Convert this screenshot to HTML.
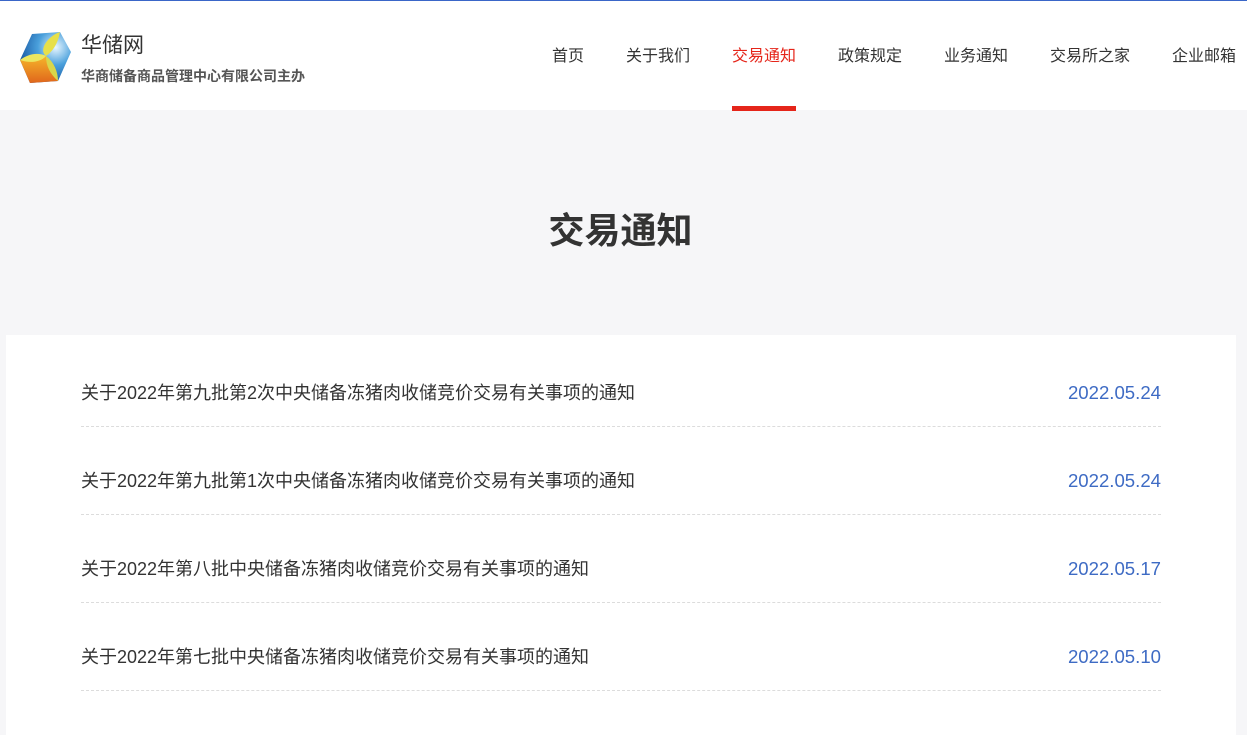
<!DOCTYPE html>
<html><head><meta charset="utf-8"><style>
body{margin:0;width:1247px;height:695px;overflow:hidden;background:#f6f6f8;font-family:"Liberation Sans","Noto Sans CJK SC",sans-serif;}
.top{height:1px;background:#3a66c8;}
.hdr{height:109px;background:#fff;position:relative;}
.logo{position:absolute;left:18px;top:29px;}
.t1{position:absolute;left:81px;top:28px;font-size:21px;color:#333;}
.t2{position:absolute;left:81px;top:65px;font-size:14px;color:#555;font-weight:bold;}
.nav a{position:absolute;top:45px;font-size:16px;color:#333;text-decoration:none;line-height:22px;}
.nav a.on{color:#e5251a;}
.bar{position:absolute;left:732px;top:105px;width:64px;height:5px;background:#e5251a;}
h1{position:absolute;top:202px;left:0;width:1241px;text-align:center;margin:0;font-size:36px;color:#333;font-weight:bold;}
.card{position:absolute;left:6px;top:335px;width:1230px;height:400px;background:#fff;}
.row{position:absolute;left:75px;width:1080px;height:88px;border-bottom:1px dashed #dcdcdc;box-sizing:border-box;}
.row span{position:absolute;top:41px;font-size:18px;line-height:26px;color:#333;}
.row b{position:absolute;right:0;top:41px;line-height:26px;font-size:18.6px;font-weight:normal;color:#3e6bc4;}
</style></head><body>
<div class="top"></div>
<div class="hdr">
<svg class="logo" width="56" height="56" viewBox="0 0 56 56">
<defs><radialGradient id="g" cx="0.7" cy="0.3" r="0.7"><stop offset="0" stop-color="#e8f6ff"/><stop offset="0.5" stop-color="#4aa0dc"/><stop offset="1" stop-color="#1d5fa8"/></radialGradient>
<linearGradient id="o" x1="0" y1="0" x2="0" y2="1"><stop offset="0" stop-color="#f5b52a"/><stop offset="1" stop-color="#e0661c"/></linearGradient></defs>
<polygon points="14,4 42,2 53,22 40,51 12,53 2,30" fill="url(#g)"/>
<polygon points="2,30 28,26 40,51 12,53" fill="url(#o)"/>
<path d="M28,26 C20,20 30,6 42,2 C40,14 34,22 28,26Z" fill="#e7e04a"/>
<path d="M28,26 C22,33 10,33 2,30 C10,24 20,22 28,26Z" fill="#ece760"/>
<path d="M28,26 C36,32 40,42 40,51 C32,44 28,36 28,26Z" fill="#d9d64a"/>
</svg>
<div class="t1">华储网</div>
<div class="t2">华商储备商品管理中心有限公司主办</div>
<div class="nav">
<a style="left:552px">首页</a><a style="left:626px">关于我们</a><a class="on" style="left:732px">交易通知</a><a style="left:838px">政策规定</a><a style="left:944px">业务通知</a><a style="left:1050px">交易所之家</a><a style="left:1172px">企业邮箱</a>
</div>
<div class="bar"></div>
</div>
<h1>交易通知</h1>
<div class="card">
<div class="row" style="top:4px"><span>关于2022年第九批第2次中央储备冻猪肉收储竞价交易有关事项的通知</span><b>2022.05.24</b></div>
<div class="row" style="top:92px"><span>关于2022年第九批第1次中央储备冻猪肉收储竞价交易有关事项的通知</span><b>2022.05.24</b></div>
<div class="row" style="top:180px"><span>关于2022年第八批中央储备冻猪肉收储竞价交易有关事项的通知</span><b>2022.05.17</b></div>
<div class="row" style="top:268px"><span>关于2022年第七批中央储备冻猪肉收储竞价交易有关事项的通知</span><b>2022.05.10</b></div>
</div>
</body></html>
